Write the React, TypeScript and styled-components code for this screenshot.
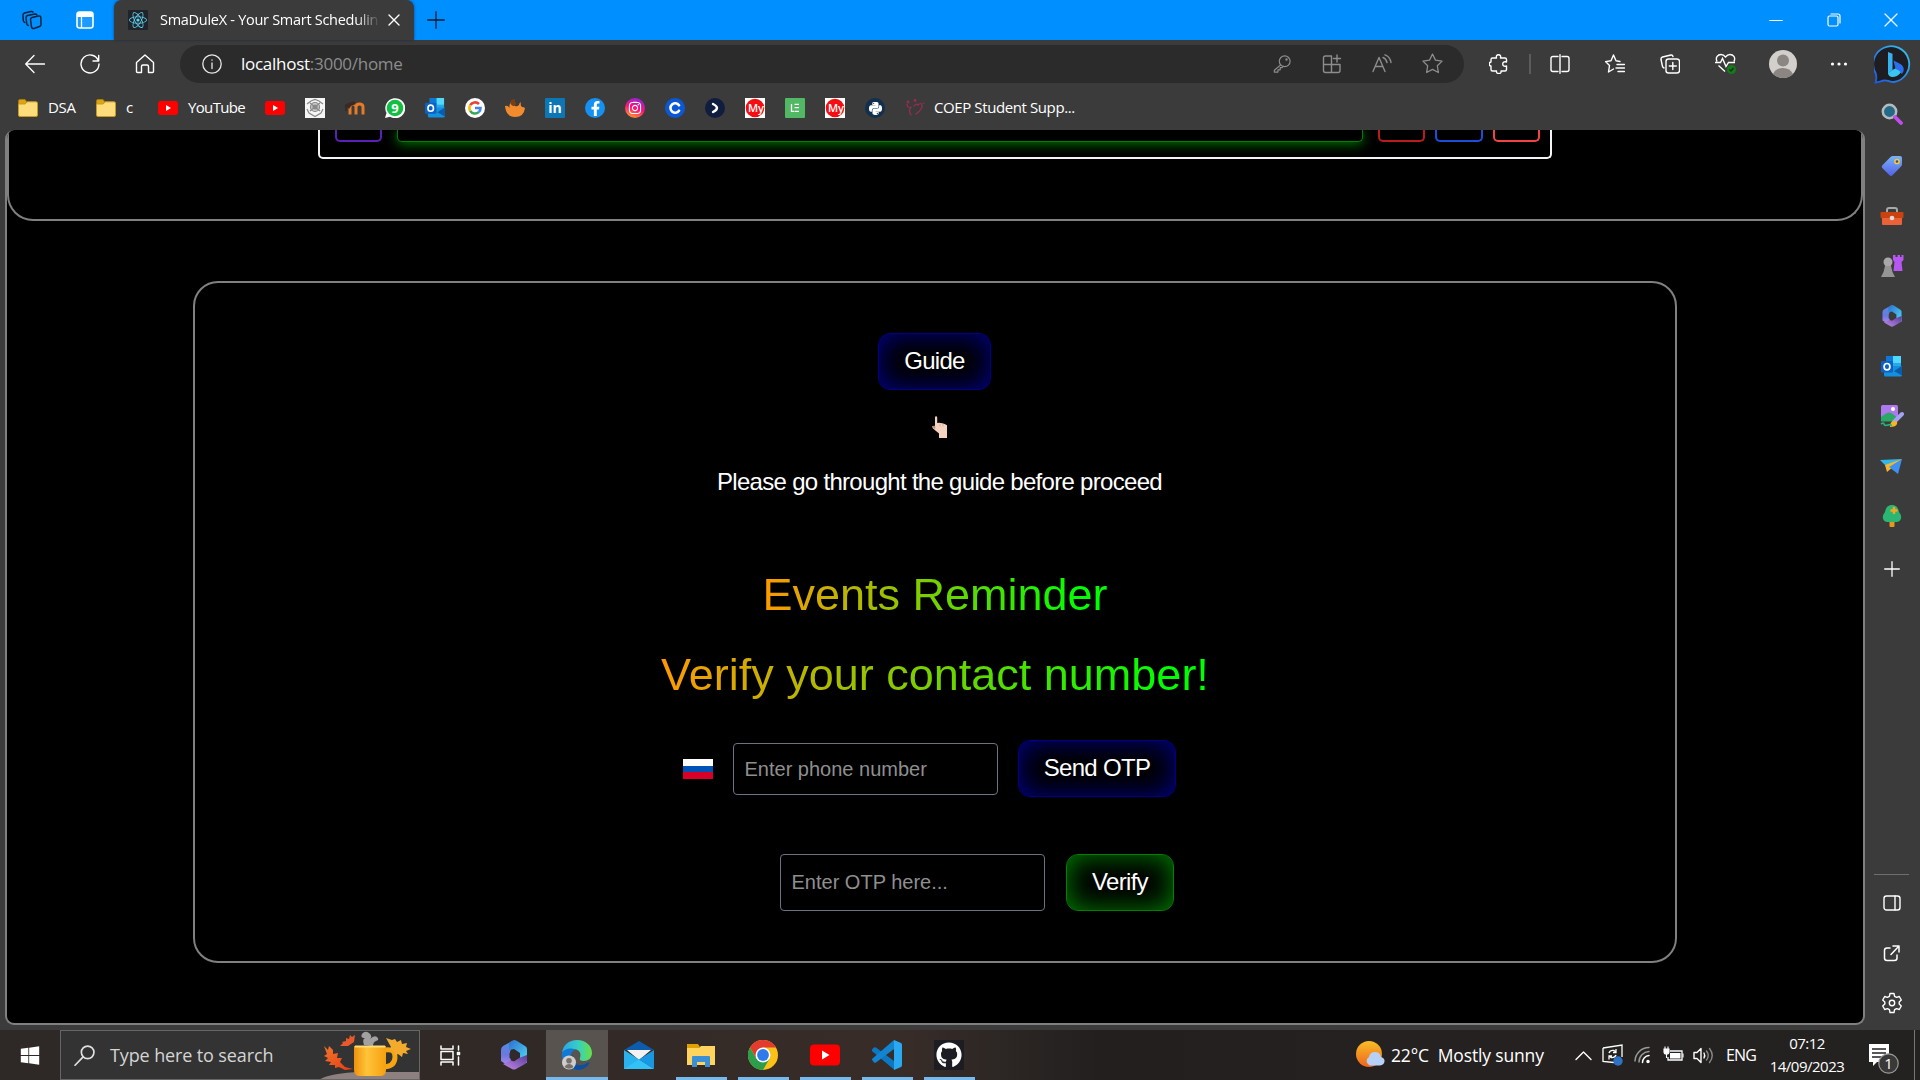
import React from 'react';
import styled, { createGlobalStyle } from 'styled-components';
import { FaReact, FaGithub, FaPython, FaInstagram, FaFacebookF, FaWindows } from 'react-icons/fa';

const ui = `"Open Sans", "Noto Sans", sans-serif`;
const pageFont = `"Liberation Sans", Arial, sans-serif`;

const Global = createGlobalStyle`
  *, *::before, *::after { box-sizing: border-box; }
  body { margin: 0; background: #3b3b3b; overflow: hidden; }
  svg { display: block; flex: none; }
`;

const Desktop = styled.div`
  width: 1920px;
  height: 1080px;
  display: flex;
  flex-direction: column;
  background: #3b3b3b;
  color: #fff;
  font-family: ${ui};
  overflow: hidden;
`;

const Cell = styled.div<{ $w: number; $h?: number; $pl?: number; $pt?: number }>`
  width: ${p => p.$w}px;
  ${p => p.$h ? `height: ${p.$h}px;` : ''}
  padding-left: ${p => p.$pl || 0}px;
  padding-top: ${p => p.$pt || 0}px;
  flex: none;
  display: flex;
  align-items: center;
  justify-content: center;
`;

/* ---------- title bar ---------- */
const TitleBar = styled.header`
  height: 40px;
  flex: none;
  display: flex;
  align-items: center;
  background: #008fff;
`;
const Tab = styled.div`
  width: 300px;
  height: 40px;
  margin-left: 8px;
  padding-left: 14px;
  display: flex;
  align-items: center;
  background: #3b3b3b;
  border-radius: 8px 8px 0 0;
  box-shadow: 0 0 3px rgba(0, 30, 80, .6);
`;
const TabTitle = styled.span`
  width: 218px;
  margin-left: 12px;
  overflow: hidden;
  white-space: nowrap;
  font-size: 14.5px;
  letter-spacing: -0.28px;
  padding-bottom: 1px;
  -webkit-mask-image: linear-gradient(to right, #000 90%, transparent 101%);
  mask-image: linear-gradient(to right, #000 90%, transparent 101%);
`;
const Favicon = styled.span<{ $bg: string; $fg?: string; $round?: boolean }>`
  width: 20px;
  height: 20px;
  flex: none;
  display: flex;
  align-items: center;
  justify-content: center;
  overflow: hidden;
  background: ${p => p.$bg};
  color: ${p => p.$fg || '#fff'};
  border-radius: ${p => p.$round ? '50%' : '1px'};
  font-weight: 700;
  font-size: 14px;
  line-height: 18px;
`;
const Spacer = styled.div` flex: 1; `;

/* ---------- body ---------- */
const Body = styled.div`
  height: 990px;
  flex: none;
  display: flex;
`;
const Main = styled.div`
  width: 1865px;
  display: flex;
  flex-direction: column;
`;
const Toolbar = styled.div`
  height: 47px;
  margin-bottom: 1px;
  flex: none;
  display: flex;
  align-items: center;
  padding-left: 8px;
`;
const Address = styled.div`
  width: 1284px;
  height: 38px;
  margin-left: 8px;
  padding: 0 7px 0 7px;
  display: flex;
  align-items: center;
  background: #2b2b2b;
  border-radius: 19px;
  color: #8d8d8d;
`;
const Url = styled.span`
  margin-left: 4px;
  flex: 1;
  font-size: 17px;
  letter-spacing: -0.27px;
  b { font-weight: 400; color: #fff; }
`;
const Divider = styled.div` width: 2px; height: 20px; margin: 0 1px; background: #5c5c5c; `;

const Bookmarks = styled.nav`
  height: 42px;
  flex: none;
  display: flex;
  align-items: center;
  padding: 0 0 2px 8px;
`;
const BookmarkLabel = styled.span<{ $w: number; $ls?: number }>`
  width: ${p => p.$w}px;
  flex: none;
  padding-bottom: 2px;
  white-space: nowrap;
  font-size: 15px;
  letter-spacing: ${p => p.$ls || 0}px;
`;

/* ---------- web page ---------- */
const Viewport = styled.main`
  width: 1860px;
  height: 895px;
  margin-left: 5px;
  flex: none;
  display: flex;
  flex-direction: column;
  align-items: center;
  background: #000;
  border: 2px solid #808080;
  border-top: 0;
  border-radius: 9px;
  overflow: hidden;
  font-family: ${pageFont};
`;
const TopSection = styled.section`
  width: 1856px;
  height: 91px;
  flex: none;
  display: flex;
  justify-content: center;
  align-items: flex-start;
  border: 2px solid #808080;
  border-top: 0;
  border-radius: 0 0 26px 26px;
`;
const EventBox = styled.div`
  width: 1234px;
  height: 29px;
  display: flex;
  align-items: flex-start;
  padding: 0 10px 0 15px;
  border: 2px solid #f3f4f6;
  border-top: 0;
  border-radius: 0 0 5px 5px;
`;
const BoxButton = styled.div<{ $c: string; $ml?: number; $w?: number }>`
  width: ${p => p.$w || 47}px;
  height: 12px;
  margin-left: ${p => p.$ml || 0}px;
  border: 2px solid ${p => p.$c};
  border-top: 0;
  border-radius: 0 0 5px 5px;
`;
const BoxField = styled.div`
  width: 966px;
  height: 12px;
  margin: 0 5px 0 15px;
  border: 1px solid #008000;
  border-top: 0;
  border-radius: 0 0 5px 5px;
  box-shadow: 0 2px 12px #007a00;
  background: #000;
`;
const Card = styled.section`
  width: 1484px;
  height: 682px;
  margin-top: 60px;
  padding-top: 50px;
  flex: none;
  display: flex;
  flex-direction: column;
  align-items: center;
  border: 2px solid #808080;
  border-radius: 25px;
`;
const GlowButton = styled.button<{ $edge: string; $glow: string; $w: number; $mr?: number }>`
  width: ${p => p.$w}px;
  height: 57px;
  margin: 0 ${p => p.$mr || 0}px 0 0;
  flex: none;
  padding: 0 0 2px;
  font: 24px/36px ${pageFont};
  letter-spacing: -0.7px;
  color: #fff;
  background: #000;
  border: 1px solid ${p => p.$edge};
  border-radius: 12px;
  box-shadow: inset 0 0 28px ${p => p.$glow};
`;
const Note = styled.p`
  margin: 74px 0 0;
  padding-left: 9px;
  font-size: 24px;
  line-height: 36px;
  letter-spacing: -0.7px;
`;
const Headings = styled.div`
  margin-top: 55px;
  display: flex;
  flex-direction: column;
  align-items: center;
`;
const GradientTitle = styled.h1`
  margin: 0;
  font-size: 45px;
  font-weight: 400;
  line-height: 80px;
  background: linear-gradient(to right, #ff9900, #00ff00 92%);
  -webkit-background-clip: text;
  background-clip: text;
  color: transparent;
`;
const FormRow = styled.div<{ $mt: number; $pl?: number; $pr?: number; $gap?: number }>`
  margin-top: ${p => p.$mt}px;
  padding-left: ${p => p.$pl || 0}px;
  padding-right: ${p => p.$pr || 0}px;
  display: flex;
  align-items: center;
  gap: ${p => p.$gap || 20}px;
`;
const Field = styled.input<{ $h: number; $pt?: number }>`
  width: 265px;
  height: ${p => p.$h}px;
  padding: ${p => p.$pt || 0}px 10.500px 0;
  background: #000;
  border: 1px solid #6b7280;
  border-radius: 4px;
  outline: none;
  font: 20px ${pageFont};
  color: #fff;
  &::placeholder { color: #8f8f8f; opacity: 1; }
`;
const Flag = styled.div`
  width: 30px;
  height: 20px;
  background: linear-gradient(#fff 0 33%, #0052b4 33% 66.5%, #d80027 66.5%);
`;
const Cursor = styled.div`
  position: absolute;
  left: 932px;
  top: 416px;
`;

/* ---------- sidebar ---------- */
const Sidebar = styled.aside`
  width: 55px;
  display: flex;
  flex-direction: column;
  align-items: center;
  padding-right: 2px;
`;
const SideRule = styled.div` width: 35px; height: 1px; margin: 277px 0 2px; background: #6e6e6e; `;

/* ---------- taskbar ---------- */
const Taskbar = styled.footer`
  height: 50px;
  flex: none;
  display: flex;
  align-items: center;
  background: linear-gradient(to right, #2e2826 0, #302926 500px, #382c28 900px, #2b2624 1010px, #221f1e 1100px, #252120 1400px, #232221 1920px);
`;
const SearchBox = styled.div`
  width: 360px;
  height: 50px;
  display: flex;
  align-items: center;
  padding-left: 13px;
  background: #333;
  border: 1px solid #666;
  overflow: hidden;
  font-size: 18px;
  color: #d4d4d4;
`;
const SearchLabel = styled.span`
  width: 210px;
  margin-left: 15px;
  white-space: nowrap;
  letter-spacing: -0.12px;
`;
const App62 = styled.div<{ $active?: boolean; $open?: boolean }>`
  width: 62px;
  height: 50px;
  flex: none;
  display: grid;
  grid-template-rows: 47px 3px;
  justify-items: center;
  align-items: center;
  background: ${p => p.$active ? '#595350' : 'transparent'};
  &::after {
    content: '';
    width: ${p => p.$active ? 62 : 51}px;
    height: 3px;
    background: ${p => p.$open ? '#76b9ed' : 'transparent'};
  }
  svg { margin-top: 2px; }
`;
const TrayText = styled.span<{ $w: number; $size: number; $ls?: number }>`
  width: ${p => p.$w}px;
  flex: none;
  white-space: pre;
  font-size: ${p => p.$size}px;
  letter-spacing: ${p => p.$ls || 0}px;
`;
const Clock = styled.div`
  width: 94px;
  flex: none;
  text-align: center;
  font-size: 15px;
  line-height: 23px;
  letter-spacing: -0.5px;
`;
const DesktopEdge = styled.div` width: 6px; height: 50px; border-left: 1px solid #777; `;

/* ---------- drawings ---------- */
type LineProps = { s?: number; w?: number; c?: string; vb?: string; children: React.ReactNode };
const Line = ({ s = 20, w = 1.4, c = '#fff', vb = '0 0 20 20', children }: LineProps) => (
  <svg width={s} height={s} viewBox={vb} fill="none" stroke={c} strokeWidth={w} strokeLinecap="round" strokeLinejoin="round">{children}</svg>
);

const Folder = () => (
  <svg width="20" height="20" viewBox="0 0 20 20"><path d="M.5 3a1.500 1.500 0 0 1 1.500-1.500h5l2 2.500-2 2.500H.5z" fill="#d9a514" stroke="#a97c08" /><path d="M.5 6h6.500l2.500-2.200h8.500a1.500 1.500 0 0 1 1.500 1.500v11.700a1.500 1.500 0 0 1-1.500 1.500H2a1.500 1.500 0 0 1-1.500-1.500z" fill="#ffdc7c" stroke="#c99a1d" /></svg>
);
const Tube = ({ s = 20 }: { s?: number }) => (
  <svg width={s} height={s} viewBox="0 0 30 30"><rect y="4.500" width="30" height="21" rx="4" fill="#f00" /><path d="M12 10.500v9l7.500-4.500z" fill="#fff" /></svg>
);
const Outlook = ({ s = 21 }: { s?: number }) => (
  <svg width={s} height={s} viewBox="0 0 21 21"><rect x="5" width="15" height="13" fill="#28a8ea" /><path d="M12 0h8v7h-8z" fill="#50d9ff" /><path d="M5 0h7v7H5z" fill="#0f78d4" /><path d="M3 10h18v9a1.500 1.500 0 0 1-1.500 1.500h-15A1.500 1.500 0 0 1 3 19z" fill="#1490df" /><path d="M21 10v9.500L13 15z" fill="#0a5ba8" /><rect y="5" width="12" height="11.500" rx="1" fill="#0b62c4" /><ellipse cx="6" cy="10.700" rx="2.900" ry="3.200" fill="none" stroke="#fff" strokeWidth="1.700" /></svg>
);
const Google = () => (
  <svg width="20" height="20" viewBox="0 0 20 20" fill="none" strokeWidth="2.600"><circle cx="10" cy="10" r="10" fill="#fff" /><path d="M14 6A5.600 5.600 0 0 0 5.200 7.200" stroke="#ea4335" /><path d="M5.200 7.200a5.600 5.600 0 0 0 0 5.600" stroke="#fbbc05" /><path d="M5.200 12.800a5.600 5.600 0 0 0 8.600 1.300" stroke="#34a853" /><path d="M13.800 14.100A5.600 5.600 0 0 0 15.500 10H10" stroke="#4285f4" /></svg>
);
const Copilot365 = ({ s, hole }: { s: number; hole: string }) => (
  <svg width={s} height={s} viewBox="0 0 30 30">
    <defs>
      <linearGradient id="m1" x1="0" y1="0" x2="0" y2="1"><stop offset="0" stopColor="#4f8fe6" /><stop offset=".6" stopColor="#6d78de" /><stop offset="1" stopColor="#a98af0" /></linearGradient>
      <linearGradient id="m2" x1="0" y1="0" x2="1" y2="1"><stop offset="0" stopColor="#2d6fd0" /><stop offset="1" stopColor="#4fdcf4" /></linearGradient>
      <linearGradient id="m3" x1="1" y1="0" x2="0" y2="1"><stop offset="0" stopColor="#5a3c9c" /><stop offset="1" stopColor="#c48ae8" /></linearGradient>
    </defs>
    <path d="M15 0 4 6Q2 7.500 2 10v11l6 4 4-3-1-10z" fill="url(#m1)" />
    <path d="M15 0 10 3v7l5-1 6 4v8l7 2V9q0-2-2-3L18 1q-1.500-1-3-1z" fill="url(#m2)" />
    <path d="M28 15v6q0 2-2 3l-9 5q-2 1-4 0L4 24l8-3.500 3 1L20 18z" fill="url(#m3)" />
    <path d="M15 10.500 19.500 13v5L15 20.500 10.500 18v-5z" fill={hole} />
  </svg>
);
const Bing = () => (
  <svg width="39" height="40" viewBox="0 0 39 40">
    <defs><linearGradient id="bb" x1="1" y1="0" x2="0" y2="1"><stop offset="0" stopColor="#36c9ee" /><stop offset=".5" stopColor="#2a8be8" /><stop offset="1" stopColor="#1d55e0" /></linearGradient></defs>
    <path d="M1.500 38.500c1.200-3 1-6 .3-9A18 18 0 1 1 20 38c-4 .2-7-2.300-10-1.500-3 .6-5 1.700-8.500 2z" fill="#1e1e22" stroke="url(#bb)" strokeWidth="1.800" />
    <path d="M14 8l4.500 1.800V26L14 30z" fill="#38b0f0" /><path d="M14 29.500 18.500 26l9-5c2.500 6-3 12-9 12-2.500 0-4-1.500-4.500-3.500z" fill="#39c6f1" /><path d="M19.500 16.500l6.500 3.200c5 3 4.500 8 1.500 10.300-1-3-3-3.800-6-5z" fill="#2a70ee" />
  </svg>
);
const Magnifier = () => (
  <svg width="22" height="22" viewBox="0 0 22 22"><circle cx="8.500" cy="8.500" r="6.700" fill="#236a86" stroke="#b5babd" strokeWidth="2.500" /><path d="M14 14l6 6" stroke="#c14dea" strokeWidth="3.800" strokeLinecap="round" /></svg>
);
const Tag = () => (
  <svg width="22" height="22" viewBox="0 0 22 22"><defs><linearGradient id="tg" x2="0" y2="1"><stop stopColor="#79b2f7" /><stop offset="1" stopColor="#5361e9" /></linearGradient></defs><path d="M1.200 10.500 9.500 2Q10.500 1 12 1h7q2 0 2 2v6q0 1.500-1 2.500l-8.500 8.800q-1.500 1.300-3 0l-7-7q-1.500-1.300-.3-2.800z" fill="url(#tg)" /><circle cx="16" cy="6.500" r="2.100" fill="#3a4aa8" stroke="#f5cc2b" strokeWidth="1.500" /></svg>
);
const Toolbox = () => (
  <svg width="24" height="20" viewBox="0 0 24 20"><path d="M7 7V4q0-2 2-2h6q2 0 2 2v3" fill="none" stroke="#a8a8a8" strokeWidth="2" /><rect x="2" y="7" width="20" height="12" rx="1" fill="#ec6238" /><rect x=".5" y="6" width="23" height="6" rx="1" fill="#c9420f" /><circle cx="12" cy="12" r="2.300" fill="#ddd" /></svg>
);
const Chess = () => (
  <svg width="24" height="24" viewBox="0 0 24 24"><path d="M13 1h2.500v2h2V1h2.500v2h1.500V1h2v5l-2 2 1 9h-9l1-9-1.500-2z" fill="#b657f2" /><circle cx="8" cy="8" r="4.500" fill="#a8a8a8" /><path d="M5 12h6l1.500 6 2.500 5H1l2.500-5z" fill="#959595" /></svg>
);
const ImageBrush = () => (
  <svg width="24" height="24" viewBox="0 0 24 24"><rect x="1" y="1" width="17" height="16" rx="1.500" fill="#ae78ef" /><circle cx="13" cy="5" r="2" fill="#fff" /><path d="M1 13l5-3.500q3-2 6 0l4 3v5H1z" fill="#2aa866" /><path d="M22 10l-8 8" stroke="#a7a1f5" strokeWidth="4" strokeLinecap="round" /><path d="M10 23q0-6 4-6t3 3q-1 3-7 3z" fill="#f7b423" /><path d="M1 20q3-2 3 0t4 1 3 1" fill="none" stroke="#28b57b" strokeWidth="1.600" /></svg>
);
const Plane = () => (
  <svg width="24" height="18" viewBox="0 0 24 18"><path d="M0 3l22-1-15 8z" fill="#34b5ea" /><path d="M22 2 5 8l2 7 6-5z" fill="#f6b72c" /><path d="M22 2 9 10l9 7z" fill="#3f91ef" /></svg>
);
const Tree = () => (
  <svg width="20" height="24" viewBox="0 0 20 24"><rect x="7.500" y="16" width="5" height="7" rx="1" fill="#e8971b" /><path d="M10 1c5 0 6.500 4 7 7 4 5 2 9.500-2 10H5C1 17.500-1 13 3 8c.5-3 2-7 7-7z" fill="#2bb673" /><path d="M12 4v5M9.500 6.500h5" stroke="#f6a623" strokeWidth="2.600" strokeLinecap="round" /></svg>
);
const Gear = () => (
  <Line s={22} w={1.400} vb="0 0 22 22"><path d="M9 1.500h4l.6 2.800 2 1.100 2.700-.9 2 3.500-2.100 1.900v2.200l2.100 1.900-2 3.500-2.700-.9-2 1.100-.6 2.800H9l-.6-2.800-2-1.100-2.700.9-2-3.500 2.100-1.900V9.900L1.700 8l2-3.500 2.700.9 2-1.100z" /><circle cx="11" cy="11" r="2.700" /></Line>
);
const Person = ({ s = 28 }: { s?: number }) => (
  <svg width={s} height={s} viewBox="0 0 28 28"><circle cx="14" cy="14" r="14" fill="#d2cfcc" /><circle cx="14" cy="10.500" r="6" fill="#8b8681" /><path d="M4 24q3-6 10-6t10 6q-4 4-10 4t-10-4z" fill="#8b8681" /></svg>
);
const Edge = () => (
  <svg width="30" height="30" viewBox="0 0 30 30">
    <defs><linearGradient id="eg"><stop stopColor="#2aa5ec" /><stop offset=".55" stopColor="#38cfc0" /><stop offset="1" stopColor="#68e044" /></linearGradient></defs>
    <path d="M0 13C1 5 7 0 15 0c9 0 15 6 15 13 0 5-4 8-8 8-3 0-5-1-4-3 2-6-2-9-7-9C5 9 1 11 0 13z" fill="url(#eg)" />
    <path d="M0 13c2-4 9-6 13-3-3 1-5 4-4 8 1 6 7 9 12 9-12 7-22-3-21-14z" fill="#0f79d5" />
    <path d="M11 14c-3 8 5 15 14 9 2-1 3-1 2 1-3 4-7 6-12 6C9 29 7 19 11 14z" fill="#0c4fa0" />
    <g transform="translate(0 15)"><circle cx="7" cy="7.500" r="7" fill="#d0cdca" /><circle cx="7" cy="5.800" r="2.800" fill="#77716d" /><path d="M2.500 12q1.500-3 4.500-3t4.500 3q-4.500 3.500-9 0z" fill="#77716d" /></g>
  </svg>
);
const Mail = () => (
  <svg width="30" height="28" viewBox="0 0 30 28"><path d="M0 9 15 0l15 9z" fill="#0c5cab" /><path d="M3 9h24L15 19z" fill="#f2f2f2" /><path d="M0 9l30 19H0z" fill="#29b2ee" /><path d="M0 28h30L15 18.500z" fill="#32c2f7" /><path d="M30 9v19L15 18.500z" fill="#1a97e3" /></svg>
);
const Explorer = () => (
  <svg width="28" height="24" viewBox="0 0 28 24"><path d="M0 1h11l2 3-2 3H0z" fill="#e0a000" /><path d="M0 5h12l2-2h14v19H0z" fill="#ffd45e" /><path d="M5 14q0-1 1-1h16q1 0 1 1v10h-5v-5h-8v5H5z" fill="#3b8fd4" /></svg>
);
const Chrome = () => (
  <svg width="30" height="30" viewBox="0 0 30 30"><circle cx="15" cy="15" r="15" fill="#fbc116" /><path d="M2 7.500a15 15 0 0 1 26 0H15L8.500 18.700z" fill="#e33b2e" /><path d="M2 7.500a15 15 0 0 0 13 22.500l6.500-11.200H8.500z" fill="#2c9e4b" /><circle cx="15" cy="15" r="7.500" fill="#fff" /><circle cx="15" cy="15" r="5.900" fill="#2f7bea" /></svg>
);
const VSCode = () => (
  <svg width="30" height="30" viewBox="0 0 30 30"><path d="M0 9.500l2-2q1-.7 2 0L22 21v8.500L.5 11.500Q-.5 10.500 0 9.500z" fill="#0d77c4" /><path d="M.5 18.500 22 0v9L4 22.500q-1 .7-2 0l-1.500-2q-1-1 0-2z" fill="#1184d2" /><path d="M22 0l7 3q1 .5 1 2v20q0 1.500-1 2l-7 3z" fill="#2aa9f2" /></svg>
);
const MugScene = () => (
  <svg width="100" height="50" viewBox="0 0 100 50">
    <defs>
      <linearGradient id="mug"><stop stopColor="#f0900c" /><stop offset=".4" stopColor="#ffc43a" /><stop offset="1" stopColor="#f5a010" /></linearGradient>
      <linearGradient id="lf" x2="1" y2="1"><stop stopColor="#f0762c" /><stop offset="1" stopColor="#e83c12" /></linearGradient>
    </defs>
    <path d="M0 50q10-7 42-8l58 0v8z" fill="#8d807f" />
    <path d="M45 15q-2-6 1-7-5 0-3-4 3-4 7-1 4 3 1 6 4-4 7-2 3 3-1 4-3 1-3 5z" fill="#a2a0a0" />
    <path d="M66 20q10-2 10 7 0 10-13 10" fill="none" stroke="#f6a513" strokeWidth="5" />
    <path d="M35 16h32v24q0 6-6 6H41q-6 0-6-6z" fill="url(#mug)" /><path d="M36 16.500h30" stroke="#ffdc78" strokeWidth="2" />
    <path d="M5 16l4 4 1-4 4 4v4l5-1-1 5 5 0-2 4 5 5 8 2-8 1-6-3-4 1v-3l-6 0 2-3-6-1 3-3-4-2 3-2z" fill="url(#lf)" />
    <path d="M36 5l-1 7-6 4-8 0 3-3-1-1 4-1 0-3 3 1 1-4 2 2z" fill="#e65a2e" />
    <path d="M67 8l6 2 3-1 2 3 4-2 1 4 5-1-1 4 5 2-5 2 2 3-5-1-1 4-4-3-3 1-1-4-5-1 2-3z" fill="#f3ab2e" />
  </svg>
);

const Slot = ({ children }: { children: React.ReactNode }) => <Cell $w={40}>{children}</Cell>;

export default function App() {
  return (
    <Desktop>
      <Global />
      <TitleBar>
        <Cell $w={64}>
          <Line c="#0b2239" w={1.500}><path d="M10 7.500 16.500 6q2-.4 2.300 1.500l.2 7q0 1.500-1.500 2L12 18.500q-2 .5-2.500-1.500L8.500 9.500q0-1.500 1.500-2z" /><path d="M6.500 15.500q-1.500 0-1.800-2L4 7.500Q4 6 5.500 5.500L13 4q1.500 0 2 1" /><path d="M2.800 12.500Q1.500 12 1.300 10.500L1 5q0-1.500 1.500-2L9 1.500q1.500-.3 2 .7" /></Line>
        </Cell>
        <Cell $w={42}>
          <svg width="18" height="18" viewBox="0 0 18 18"><rect x="1" y="1" width="16" height="16" rx="2.500" fill="#1c9aff" stroke="#fff" strokeWidth="1.600" /><path d="M1 2.500Q1 1 3 1h12q2 0 2 1.500V6H1z" fill="#fff" /><path d="M5.500 6v11" stroke="#fff" strokeWidth="1.300" /></svg>
        </Cell>
        <Tab>
          <Favicon $bg="#20232a" $fg="#5ed3f0"><FaReact size={18} /></Favicon>
          <TabTitle>SmaDuleX - Your Smart Schedulin</TabTitle>
          <Cell $w={32}><Line s={12} w={1.400} vb="0 0 12 12"><path d="M1 1l10 10M11 1 1 11" /></Line></Cell>
        </Tab>
        <Cell $w={43}><Line s={18} w={1.300} c="#031c33" vb="0 0 18 18"><path d="M9 .7v16.600M.7 9h16.600" /></Line></Cell>
        <Spacer />
        <Cell $w={58}><Line s={14} w={1.200} vb="0 0 14 14"><path d="M.7 7.500h12.600" /></Line></Cell>
        <Cell $w={57}><Line s={14} w={1.200} vb="0 0 14 14"><rect x="1" y="3" width="10" height="10" rx="1.500" /><path d="M4 1h7q2 0 2 2v7" /></Line></Cell>
        <Cell $w={58}><Line s={14} w={1.200} vb="0 0 14 14"><path d="M1 1l12 12M13 1 1 13" /></Line></Cell>
      </TitleBar>

      <Body>
        <Main>
          <Toolbar>
            <Cell $w={54}><Line w={1.300}><path d="M19.500 10H1M9 1.500.7 10 9 18.500" /></Line></Cell>
            <Cell $w={56}><Line w={1.400}><path d="M18.500 7A9 9 0 1 0 19 10M18.700 1.500V7H13" /></Line></Cell>
            <Cell $w={54}><Line w={1.400}><path d="M1.500 8.500 10 1l8.500 7.500v9q0 1-1 1h-4v-6q0-1.500-1.500-1.500H8q-1.500 0-1.500 1.500v6h-4q-1 0-1-1z" /></Line></Cell>
            <Address>
              <Cell $w={50}><Line w={1.300} c="#e8e8e8"><circle cx="10" cy="10" r="9.200" /><path d="M10 9v5.500M10 6v.2" /></Line></Cell>
              <Url><b>localhost</b>:3000/home</Url>
              <Cell $w={50}><Line s={18} w={1.300} c="#8d8d8d"><circle cx="13" cy="7" r="6" /><path d="M8.500 11 1.500 17v2h4v-2.500H8V14h2l1.500-1.500" /><circle cx="15" cy="5" r=".7" /></Line></Cell>
              <Cell $w={50}><Line w={1.400} c="#8d8d8d"><path d="M9.500 2h-6Q1.500 2 1.500 4v12.500q0 2 2 2H16q2 0 2-2v-6H1.500M9.500 2v16.500M15 1v7M11.500 4.500h7" /></Line></Cell>
              <Cell $w={50}><Line w={1.400} c="#8d8d8d"><path d="M1 17.500 7 3.500l6 14M3.200 12.500h7.600M11 3.500q3 1 4 5M13 .8q5 1.700 6 7.700" /></Line></Cell>
              <Cell $w={50}><Line s={21} w={1.200} c="#8d8d8d"><path d="M10 1l2.800 5.800 6.300.9-4.500 4.500 1 6.400-5.600-3-5.600 3 1-6.400L.9 7.700l6.300-.9z" /></Line></Cell>
            </Address>
            <Cell $w={64} $pl={6}><Line w={1.400}><path d="M3.500 4H7.500q-.8-3.200 2-3.200T11.500 4H16q1.500 0 1.500 1.500V8q-3.800-.8-3.800 2t3.800 2v3.500Q17.500 17 16 17h-4q.5 2.500-2.200 2.500T7.500 17h-4Q2 17 2 15.500V12q-1.700-.2-1.700-2T2 8V5.500Q2 4 3.500 4z" /></Line></Cell>
            <Divider />
            <Cell $w={55}><Line w={1.400}><path d="M8 2.500H3q-2 0-2 2v11q0 2 2 2h5M12 2.500h5q2 0 2 2v11q0 2-2 2h-5M10 .7v18.600" /></Line></Cell>
            <Cell $w={56}><Line w={1.400}><path d="M15 7.500l-4-.7L8.500 1 6 6.800l-5.500.8 4 4L3.500 18l5-3M12 10.500h7.500M11 14h8.500M13 17.500h6.500" /></Line></Cell>
            <Cell $w={54}><Line w={1.400}><path d="M4 14q-1.300-.5-1.600-2L1 5.500Q.7 3.500 2.500 3L11 1q1.500-.3 2 1.500" /><rect x="6" y="5" width="13.500" height="14" rx="2.500" /><path d="M12.800 8.500v7M9.300 12h7" /></Line></Cell>
            <Cell $w={56}><svg width="21" height="21" viewBox="0 0 21 21" fill="none" stroke="#fff" strokeWidth="1.400"><path d="M2 8.500C0 4 3 1.500 6 1.500q2.500 0 4.500 2.500Q12.500 1.500 15 1.500c3 0 6 2.500 4 7M0 9.500h5.500l2-4 3.500 8 2.500-4H20M3.500 12.500 10 18.500" /><circle cx="16.500" cy="16.500" r="4.500" fill="#16791a" stroke="none" /><path d="M14.500 16.500l1.500 1.500 2.500-3" stroke="#0a3b0b" /></svg></Cell>
            <Cell $w={60}><Person /></Cell>
            <Cell $w={52}><svg width="18" height="4" viewBox="0 0 18 4" fill="#fff"><circle cx="2.500" cy="2" r="1.600" /><circle cx="9" cy="2" r="1.600" /><circle cx="15.500" cy="2" r="1.600" /></svg></Cell>
          </Toolbar>
          <Bookmarks>
            <Slot><Folder /></Slot><BookmarkLabel $w={38} $ls={-0.3}>DSA</BookmarkLabel>
            <Slot><Folder /></Slot><BookmarkLabel $w={22}>c</BookmarkLabel>
            <Slot><Tube /></Slot><BookmarkLabel $w={67} $ls={-0.65}>YouTube</BookmarkLabel>
            <Slot><Tube /></Slot>
            <Slot><svg width="20" height="20" viewBox="0 0 20 20" fill="none" stroke="#888" strokeWidth="1.200"><path d="M0 0h20v20H0z" fill="#f5f5f5" stroke="none" /><circle cx="10" cy="9" r="4.500" fill="#ccc" /><circle cx="10" cy="9" r="2" fill="#888" /><path d="M2 6l4-3 4-1.500L14 3l4 3M2 11l2 4 6 3.500 6-3.500 2-4M5 5l10 8M15 5 5 13" /></svg></Slot>
            <Slot><svg width="20" height="20" viewBox="0 0 20 20" fill="none"><path d="M5 16.500V9q0-3 3-3t3 3v7.500M11 9q0-3 3.500-3T18 9v7.500" stroke="#e57a28" strokeWidth="3" /><path d="M0 6.500 9 3l2 3-5 2-2 3z" fill="#3a2a22" /><path d="M1 7v6" stroke="#222" /></svg></Slot>
            <Slot><svg width="20" height="20" viewBox="0 0 20 20"><path d="M0 20l1.500-5A10 10 0 1 1 5 18.700z" fill="#fff" /><circle cx="10" cy="10" r="8.300" fill="#12bf43" /><text x="10" y="14.500" textAnchor="middle" fontFamily={ui} fontWeight="700" fontSize="13" fill="#fff">9</text></svg></Slot>
            <Slot><Outlook s={20} /></Slot>
            <Slot><Google /></Slot>
            <Slot><svg width="20" height="20" viewBox="0 0 20 20"><path d="M0 8q3-1 4.500 2Q4 5 7 4q3 1 3 4 2 1 4-1 0-2 2-3-1 3 1 5 2 0 3 1-1 9-10 9T0 8z" fill="#f28a2e" /><path d="M5 4q1-3 5-3-1 2 1 4 0 3-2 3-3 0-4-4z" fill="#7b3d14" /></svg></Slot>
            <Slot><Favicon $bg="#0d76b5">in</Favicon></Slot>
            <Slot><Favicon $bg="#1591f2" $round><FaFacebookF size={15} /></Favicon></Slot>
            <Slot><Favicon $bg="linear-gradient(200deg,#7a2bf0,#ff0f7d 50%,#ffb31a)" $round><FaInstagram size={14} /></Favicon></Slot>
            <Slot><Favicon $bg="#0a58d6" $round><Line s={12} w={2.600} vb="0 0 12 12"><path d="M10 3.300a4.700 4.700 0 1 0 0 5.400" /></Line></Favicon></Slot>
            <Slot><Favicon $bg="#111d3f" $round><Line s={12} w={2.400} vb="0 0 12 12"><path d="M4 2q4 2 4 4t-4 4" /></Line></Favicon></Slot>
            {[0, 1].map(i => (
              <React.Fragment key={i}>
                <Slot><svg width="20" height="20" viewBox="0 0 20 20"><path d="M0 0h20v20H0z" fill="#fff" /><circle cx="10" cy="10" r="9.300" fill="#f40d12" /><text x="11" y="14" textAnchor="middle" fontFamily={ui} fontSize="11" fontWeight="600" fill="#fff">My</text></svg></Slot>
                {i === 0 && <Slot><Favicon $bg="#51b863"><svg width="10" height="10" viewBox="0 0 10 10" fill="none" stroke="#fff" strokeWidth="1.300"><path d="M1.500 1v7.300H4M4.500 1.300H9M4.500 4.700H9M4.500 8.300H9" /></svg></Favicon></Slot>}
              </React.Fragment>
            ))}
            <Slot><Favicon $bg="#12304d" $round><FaPython size={15} /></Favicon></Slot>
            <Cell $w={39}><Line s={20} w={1.200} c="#a02b50"><path d="M2 6q0 4 4 3.500M6 17Q3 13 6 9M9 8q2-3 4-1 3-3 4 0 1 4-6 9" /><circle cx="3" cy="4" r=".8" /><circle cx="10" cy="2.500" r=".8" /><path d="M18 5h1" /></Line></Cell>
            <BookmarkLabel $w={160} $ls={-0.4}>COEP Student Supp...</BookmarkLabel>
          </Bookmarks>

          <Viewport>
            <TopSection>
              <EventBox>
                <BoxButton $c="#5b21b6" />
                <BoxField />
                <BoxButton $c="#b91c1c" $ml={10} />
                <BoxButton $c="#1d4ed8" $ml={10} $w={48} />
                <BoxButton $c="#ef4444" $ml={10} />
              </EventBox>
            </TopSection>
            <Card>
              <GlowButton $w={113} $mr={1} $edge="#000086" $glow="#00008b">Guide</GlowButton>
              <Note>Please go throught the guide before proceed</Note>
              <Headings>
                <GradientTitle>Events Reminder</GradientTitle>
                <GradientTitle>Verify your contact number!</GradientTitle>
              </Headings>
              <FormRow $mt={25} $pr={11}>
                <Flag />
                <Field $h={52} $pt={1} placeholder="Enter phone number" />
                <GlowButton $w={158} $edge="#000086" $glow="#00008b">Send OTP</GlowButton>
              </FormRow>
              <FormRow $mt={57} $pl={84} $gap={21}>
                <Field $h={57} placeholder="Enter OTP here..." />
                <GlowButton $w={108} $edge="#008000" $glow="#008000">Verify</GlowButton>
              </FormRow>
            </Card>
          </Viewport>
        </Main>

        <Sidebar>
          <Cell $w={55} $h={47} $pl={4}><Bing /></Cell>
          <Cell $w={55} $h={53}><Magnifier /></Cell>
          <Cell $w={55} $h={51}><Tag /></Cell>
          <Cell $w={55} $h={49}><Toolbox /></Cell>
          <Cell $w={55} $h={51}><Chess /></Cell>
          <Cell $w={55} $h={50}><Copilot365 s={22} hole="#3b3b3b" /></Cell>
          <Cell $w={55} $h={50}><Outlook /></Cell>
          <Cell $w={55} $h={50}><ImageBrush /></Cell>
          <Cell $w={55} $h={50}><Plane /></Cell>
          <Cell $w={55} $h={50}><Tree /></Cell>
          <Cell $w={55} $h={56}><Line s={16} w={1.300} vb="0 0 16 16"><path d="M8 .7v14.600M.7 8h14.600" /></Line></Cell>
          <SideRule />
          <Cell $w={55} $h={51}><Line s={18} w={1.400} vb="0 0 18 18"><rect x="1" y="2" width="16" height="14" rx="2.500" /><path d="M12 2v14" /></Line></Cell>
          <Cell $w={55} $h={50}><Line s={17} w={1.500} vb="0 0 17 17"><path d="M7 3H4Q1.500 3 1.500 5.500V13q0 2.500 2.500 2.500h7.500Q14 15.500 14 13v-3M10 1h6v6M16 1 8 9.500" /></Line></Cell>
          <Cell $w={55} $h={50}><Gear /></Cell>
        </Sidebar>
      </Body>

      <Taskbar>
        <Cell $w={60}><svg width="20" height="21" viewBox="0 0 448 512" fill="#fff"><FaWindows size={0} /><path d="M0 93.700l183.600-25.300v177.400H0V93.700zm0 324.600l183.600 25.300V268.400H0v149.900zm203.800 28L448 480V268.400H203.800v177.900zm0-380.600v180.100H448V32L203.800 65.700z" /></svg></Cell>
        <SearchBox>
          <Line s={21} w={1.600} c="#e0e0e0"><circle cx="13" cy="7" r="6" /><path d="M8.700 11.300 1 19.300" /></Line>
          <SearchLabel>Type here to search</SearchLabel>
          <MugScene />
        </SearchBox>
        <Cell $w={61}><Line s={21} w={1.500} vb="0 0 21 21"><path d="M1 1v3h12V1M1 20v-3h12v3M1 6.500h12v8H1zM18.500 1v4M18.500 12v8" /><path d="M17.500 7.500h2v2h-2z" fill="#fff" /></Line></Cell>
        <Cell $w={65}><Copilot365 s={30} hole="#302a2c" /></Cell>
        <App62 $active $open><Edge /></App62>
        <App62><Mail /></App62>
        <App62 $open><Explorer /></App62>
        <App62 $open><Chrome /></App62>
        <App62 $open><Tube s={30} /></App62>
        <App62 $open><VSCode /></App62>
        <App62 $open><svg width="30" height="30" viewBox="0 0 30 30"><path d="M0 0h30v30H0z" fill="#1d1c22" /><g transform="translate(2 2)" color="#fff"><FaGithub size={26} /></g></svg></App62>
        <Spacer />
        <Cell $w={42}>
          <svg width="29" height="28" viewBox="0 0 29 28"><defs><linearGradient id="sun" x2="0" y2="1"><stop stopColor="#f6bf26" /><stop offset="1" stopColor="#f0641c" /></linearGradient></defs><circle cx="13" cy="13" r="13" fill="url(#sun)" /><path d="M13 24a4.500 4.500 0 0 1 0-8q1-5 6-5t6 5q4 1 3.500 4.500T24 24.500H14z" fill="#b7d0f7" /></svg>
        </Cell>
        <TrayText $w={176} $size={17.5} $ls={-0.15}>22°C  Mostly sunny</TrayText>
        <Cell $w={32}><Line s={17} w={1.400} vb="0 0 17 17"><path d="M1 12.500 8.500 5l7.500 7.500" /></Line></Cell>
        <Cell $w={28}><svg width="22" height="22" viewBox="0 0 22 22" fill="none" stroke="#fff" strokeWidth="1.300"><path d="M1 4 20 1v12M12 18.500 1 17.500V4" /><path d="M7 9q1-3 5-2.500l2 1.500M14 5v3.500h-3M14 11q-1 3-5 2.500L7 12M7 15.500V12h3" /><circle cx="16" cy="17" r="4.700" fill="#2f72c4" stroke="none" /></svg></Cell>
        <Cell $w={32}><Line s={18} w={1.500} vb="0 0 18 18"><g stroke="#999"><path d="M1 15A14 14 0 0 1 15 1.500M5 16A10.500 10.500 0 0 1 15 5.500" /></g><path d="M8.500 16.500A7 7 0 0 1 15 9.500" /><circle cx="14" cy="15.500" r="1" fill="#fff" /></Line></Cell>
        <Cell $w={28}><svg width="21" height="18" viewBox="0 0 21 18"><path d="M7 5h12v9H5v-3" fill="none" stroke="#fff" strokeWidth="1.300" /><rect x="7" y="7" width="10.500" height="5.500" fill="#fff" /><path d="M20 7.500v4M1 3h5v3q0 2-2.500 2T1 6zM2 .5V3M5 .5V3M3.500 8v4" stroke="#fff" fill="#fff" strokeWidth="1.100" /></svg></Cell>
        <Cell $w={32}><Line s={21} w={1.400} vb="0 0 21 21"><path d="M1 7.500h3l4-4v14l-4-4H1zM11 8q1.500 2.500 0 5" /><g stroke="#888"><path d="M13.500 6q3.500 4.500 0 9M16.500 3.500q5.500 7 0 14" /></g></Line></Cell>
        <Cell $w={41} $pl={7}><TrayText $w={34} $size={16} $ls={-0.9}>ENG</TrayText></Cell>
        <Clock>07:12<br />14/09/2023</Clock>
        <Cell $w={60} $pt={6}>
          <svg width="32" height="34" viewBox="0 0 32 34"><path d="M1 3h20v18H9l-4 4v-4H1z" fill="#fff" /><path d="M4 8h14M4 12h14M4 16h12" stroke="#222" strokeWidth="1.300" /><circle cx="20.500" cy="22.500" r="9.700" fill="#3a3938" stroke="#999" strokeWidth="1.200" /><text x="20.500" y="28" textAnchor="middle" fontFamily={ui} fontSize="15" fill="#fff">1</text></svg>
        </Cell>
        <DesktopEdge />
      </Taskbar>

      <Cursor>
        <svg width="16" height="23" viewBox="0 0 16 23"><path d="M3 1.500Q3 .3 4 .3t1.200 1.200V7l2-.2 3 .5 2.500.7 2.300 1.300V22H7v-4.500L1 12.500Q0 11 .5 10L3 11z" fill="#f6d3c1" /><path d="M.3 10.500 3 10v3zM8 7.500v3M11 8v2.500" fill="#b98a5c" stroke="#c79c80" strokeWidth=".6" /></svg>
      </Cursor>
    </Desktop>
  );
}
